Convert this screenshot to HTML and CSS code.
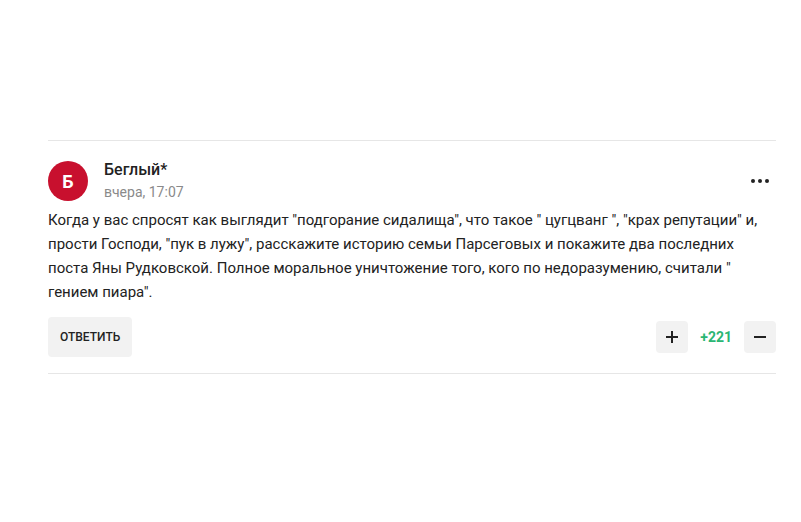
FILE: index.html
```html
<!DOCTYPE html>
<html lang="ru">
<head>
    <meta charset="UTF-8">
    <title>Комментарий</title>
    <link rel="stylesheet" href="styles.css">
</head>
<body>
    <div class="comment">
        <div class="comment-head">
            <div class="avatar">Б</div>
            <div class="author">
                <div class="author-name">Беглый*</div>
                <div class="comment-date">вчера, 17:07</div>
            </div>
            <button class="more" aria-label="Ещё">
                <span></span><span></span><span></span>
            </button>
        </div>
        <p class="comment-text">Когда у вас спросят как выглядит "подгорание сидалища", что такое " цугцванг ", "крах репутации" и, прости Господи, "пук в лужу", расскажите историю семьи Парсеговых и покажите два последних поста Яны Рудковской. Полное моральное уничтожение того, кого по недоразумению, считали " гением пиара".</p>
        <div class="comment-actions">
            <button class="reply">ОТВЕТИТЬ</button>
            <div class="rating">
                <button class="vote">
                    <svg width="14" height="14" viewBox="0 0 14 14"><path d="M7 1v12M1 7h12" stroke="#222" stroke-width="2"/></svg>
                </button>
                <span class="score">+221</span>
                <button class="vote">
                    <svg width="14" height="14" viewBox="0 0 14 14"><path d="M1 7h12" stroke="#222" stroke-width="2"/></svg>
                </button>
            </div>
        </div>
    </div>
</body>
</html>
```
FILE: styles.css
```css
body {
    margin: 0;
    font-family: Roboto, "Liberation Sans", sans-serif;
    background: #fff;
    color: #222;
}
.comment {
    margin: 140px 25px 0 48px;
    border-top: 1px solid #e6e6e6;
    border-bottom: 1px solid #e6e6e6;
    padding: 19px 0 16px;
}
.comment-head {
    display: flex;
    align-items: center;
}
.avatar {
    width: 40px;
    height: 40px;
    border-radius: 50%;
    background: #c8102e;
    color: #fff;
    font-size: 18px;
    font-weight: 700;
    display: flex;
    align-items: center;
    justify-content: center;
}
.author {
    margin-left: 16px;
    flex: 1;
}
.author-name {
    font-size: 16px;
    font-weight: 500;
    line-height: 20px;
    color: #222;
}
.comment-date {
    font-size: 14px;
    line-height: 20px;
    color: #8a8a8a;
    margin-top: 2px;
}
.more {
    border: 0;
    background: none;
    padding: 0;
    width: 18px;
    height: 24px;
    display: flex;
    align-items: center;
    justify-content: space-between;
    margin-right: 7px;
}
.more span {
    width: 4px;
    height: 4px;
    border-radius: 50%;
    background: #222;
}
.comment-text {
    margin: 6px 0 0;
    font-size: 15px;
    line-height: 24px;
    color: #222;
}
.comment-actions {
    display: flex;
    justify-content: space-between;
    align-items: center;
    margin-top: 13px;
}
.reply {
    border: 0;
    background: #f2f2f2;
    border-radius: 4px;
    height: 40px;
    padding: 0 12px;
    font-family: inherit;
    font-size: 12px;
    font-weight: 500;
    color: #222;
}
.rating {
    display: flex;
    align-items: center;
    gap: 12px;
}
.vote {
    width: 32px;
    height: 32px;
    border: 0;
    background: #f2f2f2;
    border-radius: 4px;
    display: flex;
    align-items: center;
    justify-content: center;
    padding: 0;
}
.score {
    font-size: 14px;
    font-weight: 700;
    color: #2bb673;
}
```
